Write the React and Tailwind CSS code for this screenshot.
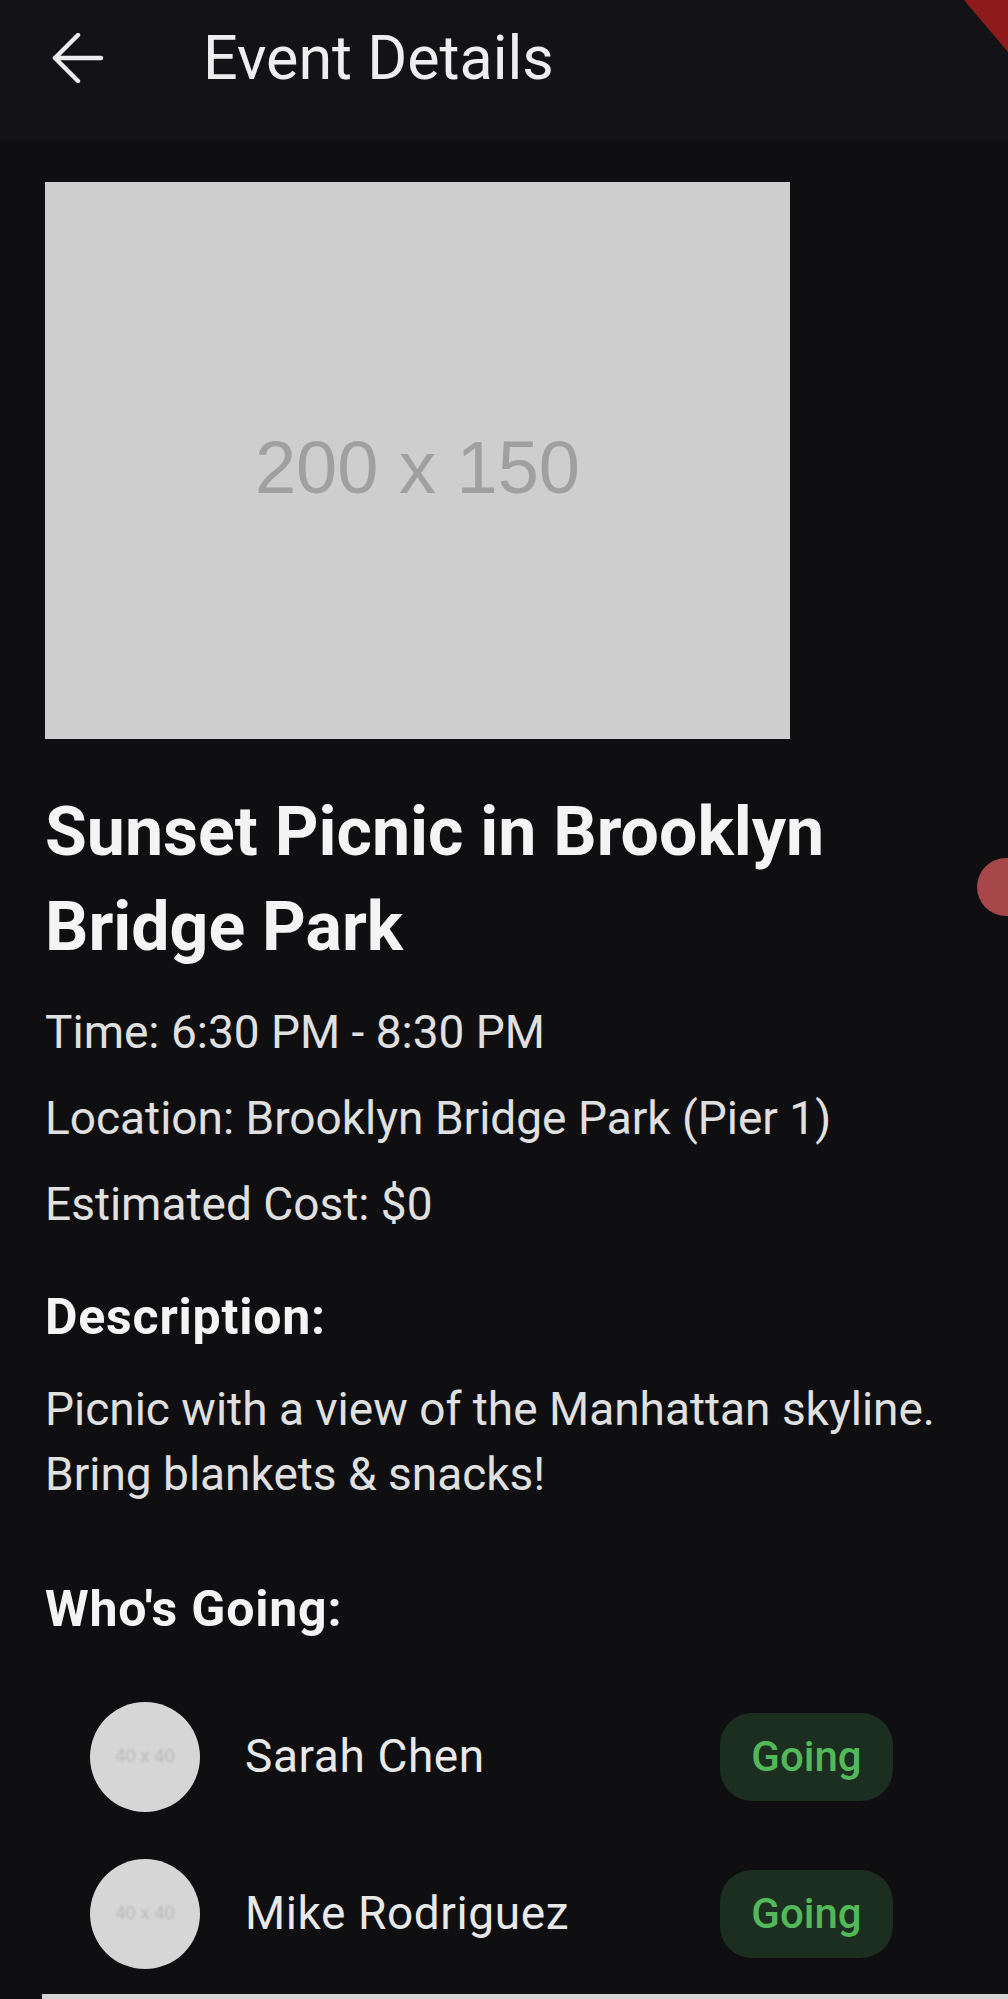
import React from 'react';

const attendees = [
  { name: 'Sarah Chen', status: 'Going' },
  { name: 'Mike Rodriguez', status: 'Going' }
];

function BackArrow() {
  return (
    <svg width="52" height="50" viewBox="0 0 52 50" fill="none">
      <path
        d="M3 25 H49 M26 2 L3 25 L26 48"
        stroke="#ededed"
        strokeWidth="4.5"
        strokeLinecap="round"
        strokeLinejoin="round"
      />
    </svg>
  );
}

export default function App() {
  return (
    <div className="relative w-[1008px] h-[1999px] overflow-hidden bg-[#0f0f12] font-['Roboto',sans-serif]">
      {/* App bar */}
      <header className="h-[140px] pb-[24px] flex items-center bg-[#131317]">
        <div className="ml-[52px]">
          <BackArrow />
        </div>
        <h1 className="ml-[99px] text-[61px] leading-none text-[#eeeeee] font-normal">
          Event Details
        </h1>
      </header>

      <main className="px-[45px] pt-[42px]">
        {/* Image placeholder */}
        <div className="w-[745px] h-[557px] bg-[#cecece] flex items-center justify-center">
          <span className="font-['Liberation_Sans',sans-serif] text-[74px] text-[#a0a0a0] mt-[14px]">
            200 x 150
          </span>
        </div>

        <h2 className="mt-[46px] text-[68px] leading-[95px] font-bold text-[#f4f4f4]">
          Sunset Picnic in Brooklyn Bridge Park
        </h2>

        <div className="mt-[25px] flex flex-col gap-[22px] text-[46px] leading-[64px] text-[#e0e0e0]">
          <p>Time: 6:30 PM - 8:30 PM</p>
          <p>Location: Brooklyn Bridge Park (Pier 1)</p>
          <p>Estimated Cost: $0</p>
        </div>

        <h3 className="mt-[49px] text-[50px] leading-[64px] tracking-[0.8px] font-bold text-[#f4f4f4]">
          Description:
        </h3>
        <p className="mt-[28px] text-[46px] leading-[65px] text-[#e0e0e0]">
          Picnic with a view of the Manhattan skyline. Bring blankets &amp; snacks!
        </p>

        <h3 className="mt-[70px] text-[50px] leading-[64px] tracking-[0.8px] font-bold text-[#f4f4f4]">
          Who's Going:
        </h3>

        <ul className="mt-[37px] pl-[45px] pr-[70px]">
          {attendees.map((a) => (
            <li key={a.name} className="h-[157px] flex items-center">
              <div className="w-[110px] h-[110px] rounded-full bg-[#d6d6d6] flex items-center justify-center">
                <span className="font-['Liberation_Sans',sans-serif] text-[18px] text-[#b8b8b8] blur-[1px]">
                  40 x 40
                </span>
              </div>
              <span className="ml-[45px] text-[46px] tracking-[0.6px] text-[#e8e8e8]">{a.name}</span>
              <span className="ml-auto w-[173px] h-[88px] rounded-[32px] bg-[#1b2e20] flex items-center justify-center text-[42px] font-medium text-[#52b85a]">
                {a.status}
              </span>
            </li>
          ))}
        </ul>
      </main>

      <div className="mt-[2px] ml-[42px] h-[8px] bg-[#d4d4d4]"></div>

      {/* Debug banner corner */}
      <svg className="absolute top-0 right-0" width="46" height="52" viewBox="0 0 46 52">
        <polygon points="2,0 46,0 46,52" fill="#8e1b1b" />
      </svg>

      {/* Floating handle at right edge */}
      <div className="absolute left-[977px] top-[858px] w-[58px] h-[58px] rounded-full bg-[#a8474a]"></div>
    </div>
  );
}
